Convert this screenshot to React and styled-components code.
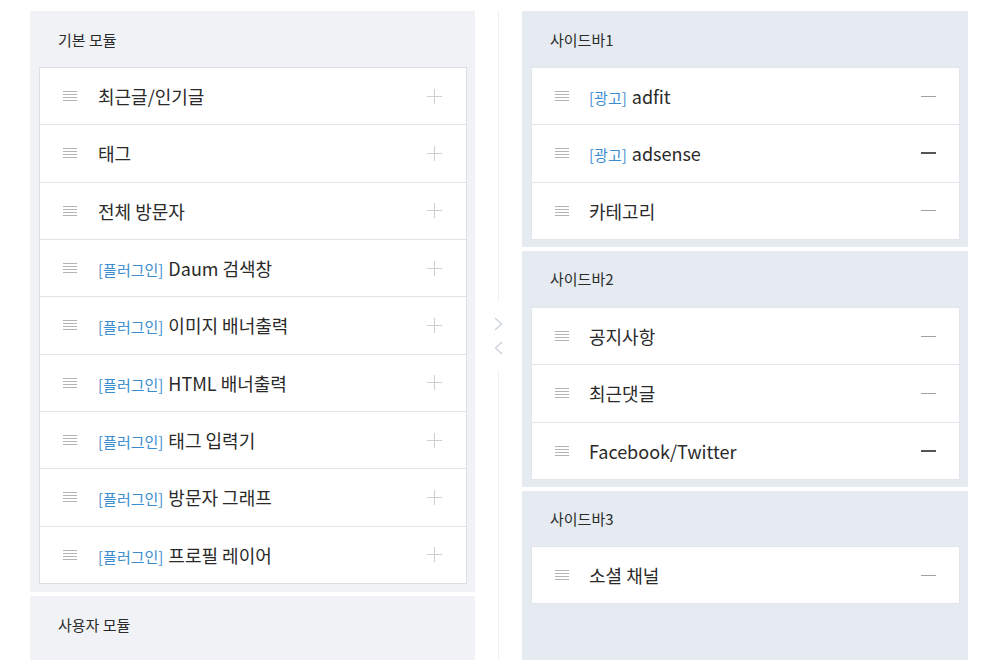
import React from 'react';
import styled, { createGlobalStyle } from 'styled-components';

const GlobalStyle = createGlobalStyle`
    body {
        margin: 0;
        background: #fff;
        font-family: "Noto Sans CJK KR", "Noto Sans", sans-serif;
        color: #333;
    }
`;

const Page = styled.div`
    display: flex;
    align-items: stretch;
    padding: 11px 0 0 30px;
    height: 660px;
    box-sizing: border-box;
`;

const Column = styled.div`
    width: ${p => p.width}px;
    display: flex;
    flex-direction: column;
    gap: 4px;
`;

const Panel = styled.section`
    background: ${p => p.bg};
    padding: 0 8px ${p => (p.last ? 0 : p.pb)}px 9px;
    flex: ${p => (p.grow ? 1 : 'none')};
    box-sizing: border-box;
`;

const Title = styled.h3`
    margin: 0;
    height: ${p => p.h || 56}px;
    display: flex;
    align-items: center;
    padding-left: 19px;
    font-size: 15px;
    font-weight: 400;
    color: #2b2b2b;
`;

const List = styled.ul`
    list-style: none;
    margin: 0;
    padding: 0;
    background: #fff;
    border: 1px solid ${p => p.line};
`;

const Row = styled.li`
    height: 56.33px;
    display: flex;
    align-items: center;
    padding: 0 ${p => p.pr}px 0 ${p => p.pl}px;
    border-top: 1px solid ${p => p.line};
    &:first-child {
        border-top: none;
    }
`;

const Handle = styled.span`
    width: 14px;
    height: 10px;
    flex: none;
    margin-right: ${p => p.gap}px;
    background: repeating-linear-gradient(
        to bottom,
        #b4b4b4 0,
        #b4b4b4 1px,
        transparent 1px,
        transparent 3px
    );
`;

const Label = styled.span`
    flex: 1;
    font-size: 18px;
    color: #2a2a2a;
`;

const Tag = styled.span`
    color: #3b8dcf;
    font-size: 15px;
    margin-right: 5px;
`;

const Plus = styled.span`
    position: relative;
    width: 15px;
    height: 15px;
    &::before,
    &::after {
        content: '';
        position: absolute;
        background: #cfcfcf;
    }
    &::before {
        left: 7px;
        top: 0;
        width: 1px;
        height: 15px;
    }
    &::after {
        top: 7px;
        left: 0;
        width: 15px;
        height: 1px;
    }
`;

const Minus = styled.span`
    width: 15px;
    height: ${p => (p.dark ? 2 : 1)}px;
    background: ${p => (p.dark ? '#555' : '#a0a0a0')};
`;

const Divider = styled.div`
    width: 47px;
    display: flex;
    flex-direction: column;
    align-items: center;
`;

const Line = styled.div`
    flex: 1;
    width: 1px;
    background: #eef0f3;
`;

const Arrows = styled.div`
    height: 68px;
    display: flex;
    flex-direction: column;
    justify-content: center;
    gap: 10px;
    color: #cdd2d8;
`;

const basic = [
    { name: '최근글/인기글' },
    { name: '태그' },
    { name: '전체 방문자' },
    { tag: '플러그인', name: 'Daum 검색창' },
    { tag: '플러그인', name: '이미지 배너출력' },
    { tag: '플러그인', name: 'HTML 배너출력' },
    { tag: '플러그인', name: '태그 입력기' },
    { tag: '플러그인', name: '방문자 그래프' },
    { tag: '플러그인', name: '프로필 레이어' },
];

const sidebars = [
    {
        title: '사이드바1',
        items: [
            { tag: '광고', name: 'adfit' },
            { tag: '광고', name: 'adsense', dark: true },
            { name: '카테고리' },
        ],
    },
    {
        title: '사이드바2',
        items: [
            { name: '공지사항' },
            { name: '최근댓글' },
            { name: 'Facebook/Twitter', dark: true },
        ],
    },
    {
        title: '사이드바3',
        items: [{ name: '소셜 채널' }],
        grow: true,
    },
];

const Chevron = ({ dir }) => (
    <svg width="9" height="14" viewBox="0 0 9 14" fill="none" stroke="currentColor" strokeWidth="1.3">
        {dir === 'right' ? <path d="M1 1l6.5 6L1 13" /> : <path d="M8 1L1.5 7 8 13" />}
    </svg>
);

const App = () => (
    <>
        <GlobalStyle />
        <Page>
            <Column width={445}>
                <Panel bg="#f0f2f5" pb={8}>
                    <Title>기본 모듈</Title>
                    <List line="#dcdee1">
                        {basic.map(i => (
                            <Row key={i.name} line="#e2e4e7" pl={23} pr={24}>
                                <Handle gap={21} />
                                <Label>
                                    {i.tag && <Tag>[{i.tag}]</Tag>}
                                    {i.name}
                                </Label>
                                <Plus />
                            </Row>
                        ))}
                    </List>
                </Panel>
                <Panel bg="#f0f2f5" grow last>
                    <Title h={58}>사용자 모듈</Title>
                </Panel>
            </Column>
            <Divider>
                <Line />
                <Arrows>
                    <Chevron dir="right" />
                    <Chevron dir="left" />
                </Arrows>
                <Line />
            </Divider>
            <Column width={446}>
                {sidebars.map(s => (
                    <Panel key={s.title} bg="#e5ebf1" pb={7} grow={s.grow} last={s.grow}>
                        <Title h={s.grow ? 55 : 56}>{s.title}</Title>
                        <List line="#e1e6ec">
                            {s.items.map(i => (
                                <Row key={i.name} line="#e3e6ea" pl={23} pr={23}>
                                    <Handle gap={20} />
                                    <Label>
                                        {i.tag && <Tag>[{i.tag}]</Tag>}
                                        {i.name}
                                    </Label>
                                    <Minus dark={i.dark} />
                                </Row>
                            ))}
                        </List>
                    </Panel>
                ))}
            </Column>
        </Page>
    </>
);

export default App;
